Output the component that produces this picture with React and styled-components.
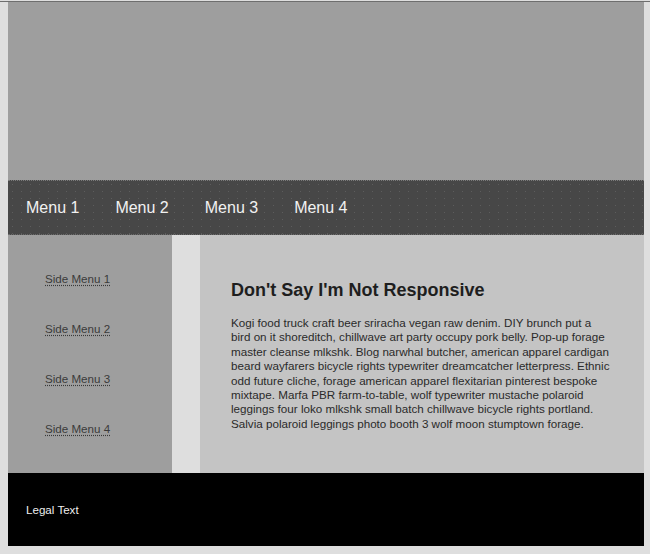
import React from "react";
import styled, { createGlobalStyle } from "styled-components";

const Global = createGlobalStyle`
  html {
    background: linear-gradient(to bottom, #dedede 0, #dedede 1px, #6e6e6e 1px, #6e6e6e 2px, #dedede 2px);
    background-color: #dedede;
  }
  body {
    margin: 0;
    padding: 2px 0 8px 8px;
    font-family: "Liberation Sans", Arial, Helvetica, sans-serif;
  }
`;

const Page = styled.div`
  width: 636px;
  display: flex;
  flex-direction: column;
`;

const Header = styled.header`
  height: 178px;
  background: #9e9e9e;
`;

const Nav = styled.nav`
  height: 55px;
  box-sizing: border-box;
  display: flex;
  align-items: center;
  background-color: #474747;
  background-image: radial-gradient(rgba(255, 255, 255, 0.12) 0.6px, transparent 0.8px);
  background-size: 9px 7px;
  border-top: 1px dotted #7a7a7a;
  border-bottom: 1px dotted #6a6a6a;
`;

const NavItem = styled.a`
  padding: 0 18px;
  font-size: 16px;
  line-height: 20px;
  color: #f2f2f2;
  text-decoration: none;
`;

const Main = styled.div`
  display: flex;
  height: 238px;
`;

const Sidebar = styled.ul`
  width: 164px;
  margin: 0;
  padding: 37px 0 0 37px;
  box-sizing: border-box;
  list-style: none;
  background: #9e9e9e;
  display: flex;
  flex-direction: column;
  gap: 36px;
`;

const SideLink = styled.a`
  display: block;
  font-size: 11.6px;
  line-height: 14px;
  color: #3a3a3a;
  text-decoration: underline dotted #3a3a3a;
  text-underline-offset: 2px;
`;

const Gutter = styled.div`
  width: 28px;
  background: #dedede;
`;

const Content = styled.section`
  flex: 1;
  background: #c4c4c4;
  padding: 44px 31.5px 0 31px;
  box-sizing: border-box;
`;

const Title = styled.h1`
  margin: 0 0 15px;
  font-size: 18px;
  line-height: 22px;
  font-weight: bold;
  color: #1e1e1e;
`;

const Body = styled.p`
  margin: 0;
  font-size: 11.65px;
  line-height: 14.4px;
  color: #2a2a2a;
`;

const Footer = styled.footer`
  height: 73px;
  background: #000;
  display: flex;
  align-items: center;
  padding: 0 18px;
  font-size: 11.6px;
  color: #eeeeee;
`;

const menus = ["Menu 1", "Menu 2", "Menu 3", "Menu 4"];
const sideMenus = ["Side Menu 1", "Side Menu 2", "Side Menu 3", "Side Menu 4"];

export default function App() {
  return (
    <>
      <Global />
      <Page>
        <Header />
        <Nav>
          {menus.map((m) => (
            <NavItem key={m}>{m}</NavItem>
          ))}
        </Nav>
        <Main>
          <Sidebar>
            {sideMenus.map((m) => (
              <li key={m}>
                <SideLink href="#">{m}</SideLink>
              </li>
            ))}
          </Sidebar>
          <Gutter />
          <Content>
            <Title>Don't Say I'm Not Responsive</Title>
            <Body>
              Kogi food truck craft beer sriracha vegan raw denim. DIY brunch put a bird on it shoreditch, chillwave art party occupy pork belly. Pop-up forage master cleanse mlkshk. Blog narwhal butcher, american apparel cardigan beard wayfarers bicycle rights typewriter dreamcatcher letterpress. Ethnic odd future cliche, forage american apparel flexitarian pinterest bespoke mixtape. Marfa PBR farm-to-table, wolf typewriter mustache polaroid leggings four loko mlkshk small batch chillwave bicycle rights portland. Salvia polaroid leggings photo booth 3 wolf moon stumptown forage.
            </Body>
          </Content>
        </Main>
        <Footer>Legal Text</Footer>
      </Page>
    </>
  );
}
